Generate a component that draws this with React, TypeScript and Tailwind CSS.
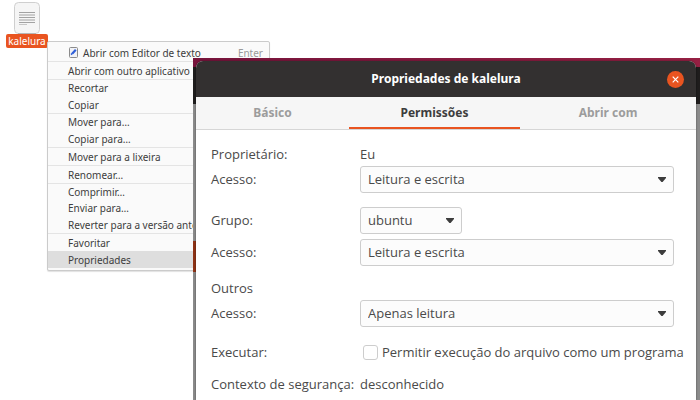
import { useState } from "react";
import type { ReactNode } from "react";

type MenuItem = { label: string; shortcut?: string; icon?: boolean; selected?: boolean };
type MenuGroup = { height: string; items: MenuItem[] };

const menuGroups: MenuGroup[] = [
  { height: "h-5 pt-[2px]", items: [{ label: "Abrir com Editor de texto", shortcut: "Enter", icon: true }] },
  { height: "h-[18px]", items: [{ label: "Abrir com outro aplicativo" }] },
  { height: "h-[34px]", items: [{ label: "Recortar" }, { label: "Copiar" }] },
  { height: "h-[34px]", items: [{ label: "Mover para…" }, { label: "Copiar para…" }] },
  { height: "h-[18px]", items: [{ label: "Mover para a lixeira" }] },
  { height: "h-[18px]", items: [{ label: "Renomear…" }] },
  {
    height: "h-[50px]",
    items: [{ label: "Comprimir…" }, { label: "Enviar para…" }, { label: "Reverter para a versão anterior" }],
  },
  { height: "h-[34px]", items: [{ label: "Favoritar" }, { label: "Propriedades", selected: true }] },
];

function EditorIcon() {
  return (
    <svg viewBox="0 0 11 11" className="size-[11px] shrink-0" aria-hidden="true">
      <rect x="1.5" y="0.5" width="8" height="10" rx="1" fill="#f1f2f6" stroke="#8b8b8b" />
      <path d="M4.4 6.4 L7.8 2.8" stroke="#2f5fd8" strokeWidth="2.2" />
      <path d="M3 7.6 L4.6 6.2" stroke="#2f5fd8" strokeWidth="1.6" />
    </svg>
  );
}

function ContextMenu() {
  return (
    <nav className="absolute top-[41px] left-[47px] w-[223px] rounded-[2px] border border-[#cbcbcb] bg-[#fafafa] pb-[2px] text-[10px] text-[#3d3d3d] shadow-[0_1px_1px_rgba(0,0,0,0.12)]">
      {menuGroups.map((group) => (
        <div
          key={group.items[0].label}
          className={`grid auto-rows-fr border-b border-[#e4e4e4] last:border-b-0 ${group.height}`}
        >
          {group.items.map((item) => (
            <button
              key={item.label}
              type="button"
              className={`flex min-h-0 items-center gap-1 pr-[6px] pl-5 text-left leading-4 whitespace-nowrap ${item.selected ? "bg-[#dedede]" : ""}`}
            >
              {item.icon && <EditorIcon />}
              <span className="flex-1">{item.label}</span>
              {item.shortcut && <span className="text-[#9a9a9a]">{item.shortcut}</span>}
            </button>
          ))}
        </div>
      ))}
    </nav>
  );
}

function DesktopFile() {
  return (
    <div className="absolute top-[2px] left-[6px] flex w-[42px] flex-col items-center">
      <svg viewBox="0 0 26 32" className="h-8 w-[26px]" aria-hidden="true">
        <rect x="0.5" y="0.5" width="25" height="31" rx="4" fill="#f5f5f5" stroke="#cfcfcf" />
        <path d="M4 31.5H22" stroke="#b5b5b5" />
        <path d="M5 10.5H21M5 13H21M5 15.5H21M5 18H21M5 20.5H21" stroke="#a2a2a2" />
        <path d="M5 22.5H13" stroke="#c6c6c6" />
      </svg>
      <span className="w-full rounded-[2px] bg-[#e95420] text-center text-[10px] leading-[14px] text-white">
        kalelura
      </span>
    </div>
  );
}

function Row({ label, id, className, children }: { label: string; id?: string; className: string; children?: ReactNode }) {
  return (
    <div className={`grid grid-cols-[149px_1fr] items-center ${className}`}>
      {id ? (
        <label htmlFor={id} className="pb-[2px]">
          {label}
        </label>
      ) : (
        <span>{label}</span>
      )}
      {children}
    </div>
  );
}

function Dropdown({ id, value, options, width }: { id: string; value: string; options: string[]; width: string }) {
  return (
    <div className={`relative ${width}`}>
      <select
        id={id}
        defaultValue={value}
        className="block h-[27px] w-full appearance-none rounded-[3px] border border-[#cdcdcd] bg-[#fcfcfc] pr-6 pb-[2px] pl-[7px] leading-5"
      >
        {options.map((option) => (
          <option key={option}>{option}</option>
        ))}
      </select>
      <svg viewBox="0 0 8 5" className="pointer-events-none absolute top-[11px] right-2 h-[5px] w-2" aria-hidden="true">
        <path d="M0 0H8V1L4.6 5H3.4L0 1Z" fill="#3d3d3d" />
      </svg>
    </div>
  );
}

const accessOptions = ["Leitura e escrita", "Apenas leitura", "Nenhum"];
const tabs = ["Básico", "Permissões", "Abrir com"];

function PropertiesWindow() {
  const [active, setActive] = useState("Permissões");
  return (
    <section className="relative flex flex-1 flex-col overflow-hidden rounded-t-[7px] bg-white shadow-[0_0_2px_rgba(0,0,0,0.5)]">
      <header className="grid h-9 grid-cols-[1fr_auto_1fr] items-center bg-[#333030] text-white">
        <h1 className="col-start-2 text-[12px] leading-5 font-bold">Propriedades de kalelura</h1>
        <button
          type="button"
          aria-label="Fechar"
          className="mr-3 flex size-[17px] items-center justify-center justify-self-end rounded-full bg-[#e95420]"
        >
          <svg viewBox="0 0 7 7" className="size-[7px]" aria-hidden="true">
            <path d="M0.7 0.7L6.3 6.3M6.3 0.7L0.7 6.3" stroke="#fff" strokeWidth="1.2" />
          </svg>
        </button>
      </header>
      <div role="tablist" className="grid h-[33px] grid-cols-[153fr_171fr_176fr] border-b border-[#d6d6d6] bg-[#f6f6f6]">
        {tabs.map((tab) => (
          <button
            key={tab}
            type="button"
            role="tab"
            aria-selected={tab === active}
            onClick={() => setActive(tab)}
            className={`border-b-2 pt-[2px] text-[12px] leading-5 font-bold ${tab === active ? "border-[#e95420] text-[#3d3d3d]" : "border-transparent text-[#9c9c9c]"}`}
          >
            {tab}
          </button>
        ))}
      </div>
      <form className="pt-[14px] pr-[22px] pb-1 pl-[15px] font-['Open_Sans',sans-serif] text-[13px] leading-5 text-[#4a4a4a]">
        <Row label="Proprietário:" className="h-5">
          <span>Eu</span>
        </Row>
        <Row label="Acesso:" id="owner-access" className="mt-[2px]">
          <Dropdown id="owner-access" value="Leitura e escrita" options={accessOptions} width="w-full" />
        </Row>
        <Row label="Grupo:" id="group" className="mt-[14px]">
          <Dropdown id="group" value="ubuntu" options={["ubuntu"]} width="w-[102px]" />
        </Row>
        <Row label="Acesso:" id="group-access" className="mt-[5px]">
          <Dropdown id="group-access" value="Leitura e escrita" options={accessOptions} width="w-full" />
        </Row>
        <Row label="Outros" className="mt-3 h-5" />
        <Row label="Acesso:" id="others-access" className="mt-[2px]">
          <Dropdown id="others-access" value="Apenas leitura" options={accessOptions} width="w-full" />
        </Row>
        <Row label="Executar:" className="mt-[15px] h-5">
          <label className="flex items-center gap-1 pl-[3px] whitespace-nowrap">
            <input
              type="checkbox"
              className="size-[15px] shrink-0 appearance-none rounded-[3px] border border-[#cdcdcd] bg-white checked:bg-[#e95420]"
            />
            Permitir execução do arquivo como um programa
          </label>
        </Row>
        <Row label="Contexto de segurança:" className="mt-3 h-5">
          <span>desconhecido</span>
        </Row>
      </form>
    </section>
  );
}

export default function App() {
  return (
    <main className="relative min-h-screen overflow-hidden bg-white font-['Noto_Sans','Open_Sans',sans-serif]">
      <DesktopFile />
      <ContextMenu />
      <div className="absolute top-[58px] right-0 bottom-0 left-[193px] flex overflow-hidden bg-[#8b8b8b] pt-[3px] pr-1 pl-[3px]">
        <div className="absolute inset-x-0 top-0 h-[10px] bg-linear-to-r from-[#78143c] to-[#962043]" />
        <div className="absolute inset-x-0 top-[9px] h-[37px] bg-[#1f1d1d]" />
        <div className="absolute top-[183px] left-0 h-[31px] w-[3px] bg-[#8f3316]" />
        <PropertiesWindow />
      </div>
    </main>
  );
}
